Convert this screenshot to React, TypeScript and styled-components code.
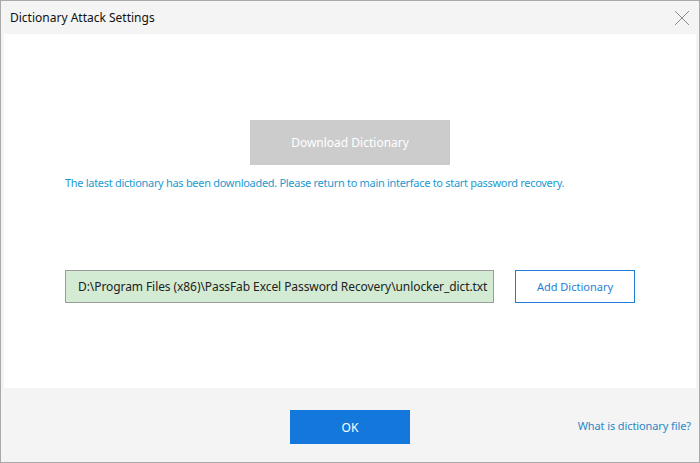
import React from "react";
import styled, { createGlobalStyle } from "styled-components";

const GlobalStyle = createGlobalStyle`
  html, body {
    margin: 0;
    padding: 0;
    background: #ffffff;
  }
  * {
    box-sizing: border-box;
  }
`;

const Window = styled.div`
  width: 700px;
  height: 463px;
  display: flex;
  flex-direction: column;
  background: #f4f4f4;
  border: 1px solid #a9a9a9;
  font-family: "Noto Sans", "Liberation Sans", sans-serif;
`;

const TitleBar = styled.div`
  height: 33px;
  display: flex;
  align-items: center;
  justify-content: space-between;
  padding: 0 6px 0 9px;
`;

const Title = styled.span`
  font-size: 12px;
  color: #111;
`;

const CloseButton = styled.button`
  width: 22px;
  height: 22px;
  padding: 0;
  border: none;
  background: transparent;
  display: flex;
  align-items: center;
  justify-content: center;
`;

const Panel = styled.div`
  flex: 1;
  margin: 0 3px;
  background: #ffffff;
  display: flex;
  flex-direction: column;
  padding: 86px 0 0 61px;
`;

const DownloadButton = styled.button`
  align-self: flex-start;
  margin-left: 185px;
  width: 200px;
  height: 45px;
  border: none;
  background: #cccccc;
  color: #ffffff;
  font-family: inherit;
  font-size: 12px;
`;

const Notice = styled.p`
  margin: 10px 0 0;
  font-size: 11px;
  letter-spacing: -0.3px;
  color: #1e9ad0;
`;

const PathRow = styled.div`
  margin-top: 80px;
  display: flex;
  align-items: center;
  gap: 21px;
`;

const PathBox = styled.div`
  width: 429px;
  height: 33px;
  display: flex;
  align-items: center;
  padding-left: 12px;
  background: #d3ebd3;
  border: 1px solid #9a9a9a;
  font-size: 12px;
  letter-spacing: -0.08px;
  color: #222;
  white-space: nowrap;
`;

const OutlineButton = styled.button`
  width: 120px;
  height: 33px;
  background: #ffffff;
  border: 1px solid #1f7ed4;
  color: #1f7ed4;
  font-family: inherit;
  font-size: 11px;
`;

const Footer = styled.div`
  height: 74px;
  display: grid;
  grid-template-columns: 1fr 120px 1fr;
  align-items: center;
  padding-top: 4px;
`;

const PrimaryButton = styled.button`
  grid-column: 2;
  height: 34px;
  border: none;
  background: #1477dc;
  color: #ffffff;
  font-family: inherit;
  font-size: 12px;
`;

const HelpLink = styled.a`
  justify-self: end;
  margin: 0 8px 4px 0;
  font-size: 11px;
  letter-spacing: -0.1px;
  color: #2a88c6;
  text-decoration: none;
  cursor: pointer;
`;

export default function App() {
  return (
    <>
      <GlobalStyle />
      <Window>
        <TitleBar>
          <Title>Dictionary Attack Settings</Title>
          <CloseButton aria-label="Close">
            <svg width="16" height="16" viewBox="0 0 16 16">
              <path d="M1 1 L15 15 M15 1 L1 15" stroke="#8a8a8a" strokeWidth="1" fill="none" />
            </svg>
          </CloseButton>
        </TitleBar>
        <Panel>
          <DownloadButton disabled>Download Dictionary</DownloadButton>
          <Notice>
            The latest dictionary has been downloaded. Please return to main interface to start password recovery.
          </Notice>
          <PathRow>
            <PathBox>D:\Program Files (x86)\PassFab Excel Password Recovery\unlocker_dict.txt</PathBox>
            <OutlineButton>Add Dictionary</OutlineButton>
          </PathRow>
        </Panel>
        <Footer>
          <PrimaryButton>OK</PrimaryButton>
          <HelpLink>What is dictionary file?</HelpLink>
        </Footer>
      </Window>
    </>
  );
}
